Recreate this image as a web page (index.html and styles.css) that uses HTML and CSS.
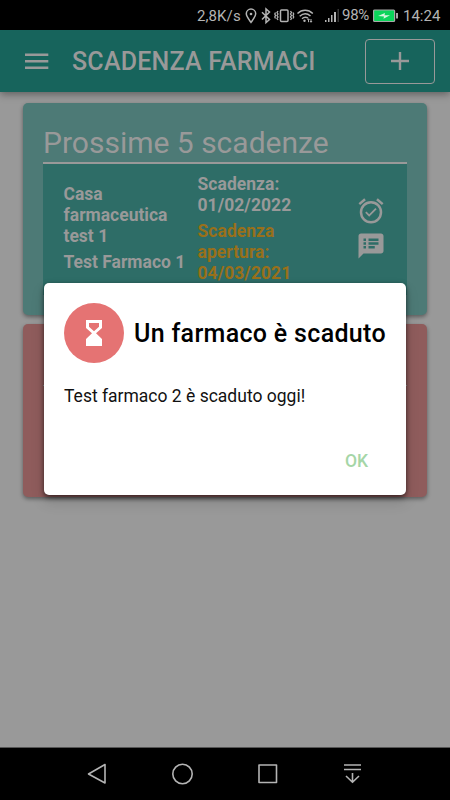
FILE: index.html
```html
<!DOCTYPE html>
<html lang="it">
<head>
<meta charset="utf-8">
<title>Scadenza Farmaci</title>
<link rel="stylesheet" href="styles.css">
</head>
<body>
<div class="status">
  <span class="speed">2,8K/s</span>
  <svg class="status-icons" width="70" height="18" viewBox="0 0 70 18" fill="none" stroke="currentColor" stroke-width="1.5">
    <path d="M6 15.400C3.500 12 1.300 9.300 1.300 6.800a4.700 4.700 0 0 1 9.400 0C10.700 9.300 8.500 12 6 15.400Z"/>
    <circle cx="6" cy="7" r="1.300" fill="currentColor" stroke="none"/>
    <path d="M17 5.200l7.500 7.300-3.500 3V2l3.500 3-7.500 7.500"/>
    <rect x="35.500" y="3" width="7.500" height="11.500" rx="1"/>
    <path d="M33 4l-1 1.500 1 1.500-1 1.500 1 1.500-1 1.500 1 1.500M30.500 5.500l-.7 1.500.7 1.500-.7 1.500.7 1.500M45.500 4l1 1.500-1 1.500 1 1.500-1 1.500 1 1.500-1 1.500M48 5.500l.7 1.500-.7 1.500.7 1.500-.7 1.500" stroke-width="1.300"/>
    <path d="M52.500 6.500c4.500-4.200 10.800-4.200 15.300 0M54.700 9.200c3.400-3 7.500-3 10.800-.2M57 11.700c2-1.700 4-1.800 6-.5"/>
    <circle cx="59.500" cy="13.700" r="1.200" fill="currentColor" stroke="none"/>
    <path d="M63.500 15.200v-3M66 12v3M62.500 13l1-1.300 1 1.300M65 14l1 1.300 1-1.300" stroke-width="1"/>
  </svg>
  <svg class="signal" width="15" height="14" viewBox="0 0 15 14" fill="currentColor">
    <path d="M0 11h1.500v2H0zM3 9h1.500v4H3zM6 6h1.500v7H6zM9 3h2v10H9z"/><path d="M12.500 0H14v13h-1.500z" opacity=".3"/>
  </svg>
  <span class="percent">98%</span>
  <svg class="battery" width="26" height="14" viewBox="0 0 26 14">
    <rect x=".6" y="1" width="21" height="11.500" rx="1" fill="#0bd45b" stroke="#a8a8a8" stroke-width="1.200"/>
    <path d="M23 4h2v5.500h-2z" fill="#a8a8a8"/><path d="M5 7l7-3-.5 2.200H17L10.500 9.700l.5-2.200z" fill="#d6f5df"/>
  </svg>
  <span class="clock">14:24</span>
</div>
<header class="appbar">
  <svg class="menu" width="24" height="17" viewBox="0 0 24 17" fill="currentColor"><path d="M0 .5h23.300v2.600H0zM0 7h23.300v2.600H0zM0 13.500h23.300v2.600H0z"/></svg>
  <h1>SCADENZA FARMACI</h1>
  <button class="add"><svg width="20" height="20" viewBox="0 0 20 20" fill="none" stroke="currentColor" stroke-width="2.400"><path d="M10 1v18M1 10h18"/></svg></button>
</header>
<main>
  <section class="card next">
    <h2>Prossime 5 scadenze</h2>
    <div class="drug">
      <div class="name"><p>Casa farmaceutica test 1</p><p>Test Farmaco 1</p></div>
      <div class="dates"><p>Scadenza: 01/02/2022</p><p class="warn">Scadenza apertura: 04/03/2021</p></div>
      <div class="actions">
        <svg width="30" height="30" viewBox="0 0 24 24" fill="currentColor"><path d="M22 5.720l-4.600-3.860-1.290 1.530 4.600 3.860L22 5.720zM7.880 3.390L6.600 1.860 2 5.710l1.290 1.530 4.590-3.850zM12 4a9 9 0 1 0 0 18 9 9 0 0 0 0-18zm0 16a7 7 0 1 1 0-14 7 7 0 0 1 0 14zm-1.460-5.470L8.410 12.400l-1.060 1.060 3.180 3.180 6-6-1.060-1.060-4.930 4.950z"/></svg>
        <svg width="30" height="30" viewBox="0 0 24 24" fill="currentColor"><path d="M20 2H4c-1.100 0-1.990.9-1.990 2L2 22l4-4h14c1.100 0 2-.9 2-2V4c0-1.100-.9-2-2-2zM8 14H6v-2h2v2zm0-3H6V9h2v2zm0-3H6V6h2v2zm7 6h-5v-2h5v2zm3-3h-8V9h8v2zm0-3h-8V6h8v2z"/></svg>
      </div>
    </div>
  </section>
  <section class="card expired"><div class="expired-row"></div></section>
  <div class="dialog" role="dialog">
    <div class="dialog-head">
      <div class="badge"><svg width="40" height="40" viewBox="0 0 40 40" fill="#fff"><path fill-rule="evenodd" d="M12 7h16v8l-6 5.300 6 5.600V33H12v-7.100l6-5.600-6-5.300zm3 3v3.800l5 4.500 5-4.500V10z"/></svg></div>
      <h3>Un farmaco è scaduto</h3>
    </div>
    <p class="message">Test farmaco 2 è scaduto oggi!</p>
    <button class="ok">OK</button>
  </div>
</main>
<nav class="navbar">
  <svg width="20" height="24" viewBox="0 0 20 24"><path d="M18 2.500v18.500L1.500 12z"/></svg>
  <svg width="24" height="24" viewBox="0 0 24 24"><circle cx="11.500" cy="12" r="9.700"/></svg>
  <svg width="20" height="24" viewBox="0 0 20 24"><rect x="1" y="3" width="17.500" height="17.500"/></svg>
  <svg width="20" height="24" viewBox="0 0 20 24"><path d="M2 3h17M2 7.500h17M10.500 11v9M4 14l6.500 6.300L17 14"/></svg>
</nav>
</body>
</html>
```
FILE: styles.css
```css
* { box-sizing: border-box; margin: 0; padding: 0; }
body { width: 450px; height: 800px; display: flex; flex-direction: column; overflow: hidden; background: #999; color: #999; font-family: Roboto, sans-serif; }
svg { display: block; flex: none; }
button { background: none; border: 0; font: inherit; color: inherit; }
.status { height: 30px; flex: none; background: #000; color: #b4b4b4; display: flex; align-items: center; font-size: 15px; padding: 1px 0 0 197px; white-space: nowrap; }
.speed { width: 48px; letter-spacing: .1px; }
.signal { margin-left: 10px; }
.percent { margin: -2px 0 0 2px; width: 31px; font-size: 15px; letter-spacing: -.3px; }
.battery { margin-left: 0; }
.clock { margin-left: 4px; }
.appbar { position: relative; height: 62px; flex: none; display: flex; align-items: center; padding: 0 15px 0 25px; background: #17645c; box-shadow: 0 2px 8px rgba(0,0,0,.4); }
.appbar h1 { margin-left: 23px; font-size: 25px; letter-spacing: .22px; font-weight: 500; white-space: nowrap; }
.add { margin-left: auto; width: 70px; height: 45px; border: 1px solid #999; border-radius: 4px; display: flex; align-items: center; justify-content: center; }
main { position: relative; flex: 1; padding: 11px 23px; }
.card { border-radius: 5px; box-shadow: 0 2px 4px rgba(0,0,0,.4); padding: 20px; }
.next { height: 212px; background: #4d7a76; }
.next h2 { height: 41px; border-bottom: 2px solid #999; font-size: 30px; line-height: 39px; font-weight: 400; white-space: nowrap; }
.drug { height: 131px; background: #2e6d67; display: flex; font-size: 17.500px; line-height: 21px; font-weight: 700; padding-left: 20.500px; }
.name { width: 134px; padding-top: 20px; }
.name p + p, .dates p + p { margin-top: 5px; }
.dates { width: 120px; padding-top: 9.500px; letter-spacing: .04px; }
.warn { color: #99701a; }
.actions { margin-left: 38.500px; padding-top: 32px; display: flex; flex-direction: column; gap: 5px; }
.expired { margin-top: 9px; height: 173px; background: #8f5c5c; }
.expired-row { margin-top: 41px; border-top: 1px solid #999; }
.dialog { position: absolute; left: 44px; top: 191px; width: 362px; height: 212px; background: #fff; color: #000; border-radius: 5px; padding: 20px; display: flex; flex-direction: column; box-shadow: 0 2px 5px rgba(0,0,0,.6), 0 7px 14px rgba(0,0,0,.15); }
.dialog-head { display: flex; align-items: center; gap: 10px; }
.badge { width: 60px; height: 60px; border-radius: 50%; background: #e57373; display: grid; place-items: center; }
.dialog h3 { font-size: 25px; letter-spacing: .32px; font-weight: 500; white-space: nowrap; }
.message { margin-top: 22px; font-size: 17.500px; line-height: 22px; white-space: nowrap; color: #111; }
.ok { margin: 44px 18px 0 0; align-self: flex-end; color: #a5d6a7; font-size: 17.500px; line-height: 21px; font-weight: 500; }
.navbar { height: 53px; flex: none; background: #000; border-top: 1px solid #555; color: #b4b4b4; display: flex; justify-content: space-between; align-items: center; padding: 0 88px 0 87px; }
.navbar svg { fill: none; stroke: currentColor; stroke-width: 1.600; stroke-linejoin: round; }
```
